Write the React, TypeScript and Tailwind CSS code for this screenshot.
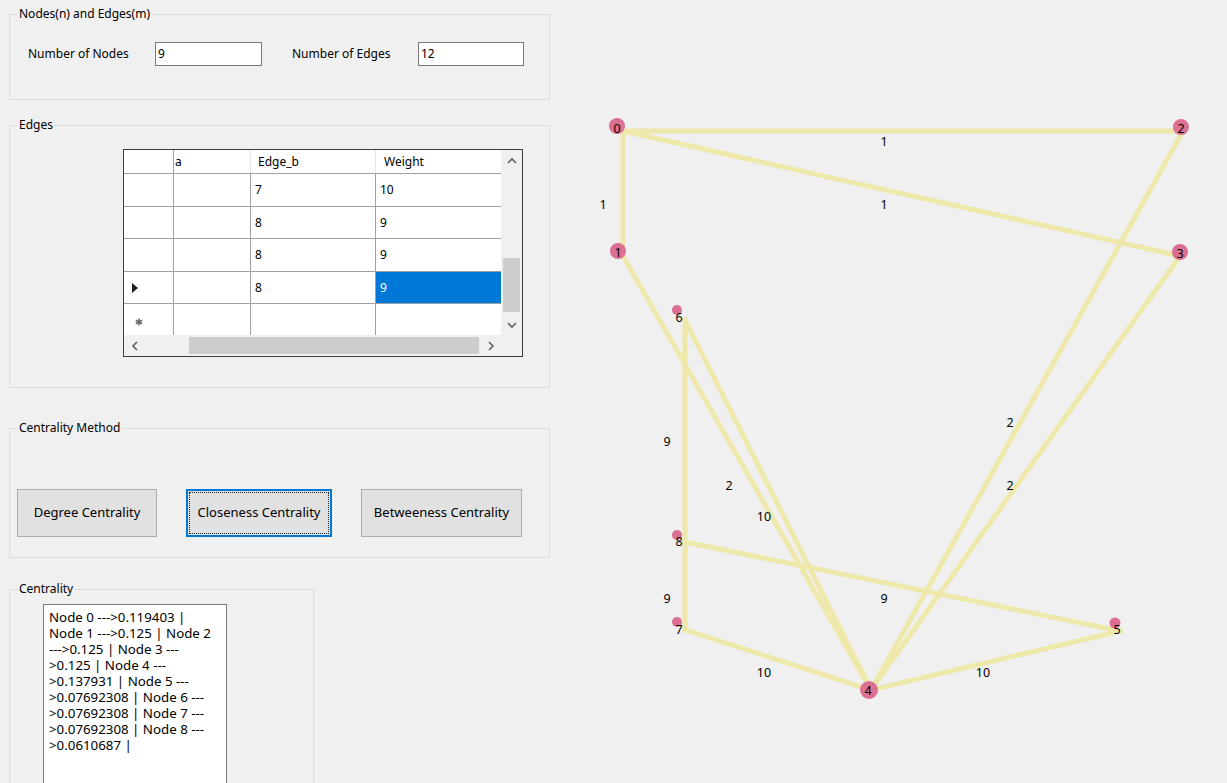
import React from "react";

const nodes = [
  { id: "0", cx: 617, cy: 126, r: 8, lx: 617, ly: 128 },
  { id: "1", cx: 618, cy: 251, r: 8, lx: 618, ly: 252 },
  { id: "2", cx: 1181, cy: 127, r: 8, lx: 1181, ly: 128 },
  { id: "3", cx: 1180, cy: 252, r: 8, lx: 1180, ly: 253 },
  { id: "4", cx: 869, cy: 690, r: 9, lx: 868, ly: 690 },
  { id: "5", cx: 1115, cy: 623, r: 5.5, lx: 1117, ly: 629 },
  { id: "6", cx: 677, cy: 310, r: 5, lx: 679, ly: 317 },
  { id: "7", cx: 677, cy: 622, r: 5, lx: 679, ly: 629 },
  { id: "8", cx: 677, cy: 535, r: 5, lx: 679, ly: 541 },
];

const anchor: Record<string, [number, number]> = {
  "0": [623, 131],
  "1": [623, 256],
  "2": [1183, 131],
  "3": [1180, 256],
  "4": [871, 690],
  "5": [1120, 631],
  "6": [685, 320],
  "7": [685, 630],
  "8": [685, 542],
};

const edges: { a: string; b: string; w: string; tx: number; ty: number }[] = [
  { a: "0", b: "2", w: "1", tx: 884, ty: 141 },
  { a: "0", b: "1", w: "1", tx: 603, ty: 204 },
  { a: "0", b: "3", w: "1", tx: 884, ty: 204 },
  { a: "1", b: "4", w: "2", tx: 729, ty: 485 },
  { a: "2", b: "4", w: "2", tx: 1010, ty: 422 },
  { a: "3", b: "4", w: "2", tx: 1010, ty: 485 },
  { a: "6", b: "8", w: "9", tx: 667, ty: 441 },
  { a: "6", b: "4", w: "10", tx: 764, ty: 516 },
  { a: "8", b: "7", w: "9", tx: 667, ty: 598 },
  { a: "8", b: "5", w: "9", tx: 884, ty: 598 },
  { a: "7", b: "4", w: "10", tx: 764, ty: 672 },
  { a: "5", b: "4", w: "10", tx: 983, ty: 672 },
];

const centralityLines = [
  "Node 0 --->0.119403 |",
  "Node 1 --->0.125 | Node 2",
  "--->0.125 | Node 3 ---",
  ">0.125 | Node 4 ---",
  ">0.137931 | Node 5 ---",
  ">0.07692308 | Node 6 ---",
  ">0.07692308 | Node 7 ---",
  ">0.07692308 | Node 8 ---",
  ">0.0610687 |",
];

const rows = [
  { b: "7", w: "10", h: "h-[33px]" },
  { b: "8", w: "9", h: "h-[32px]" },
  { b: "8", w: "9", h: "h-[33px]" },
  { b: "8", w: "9", h: "h-[32px]", current: true },
];

function Chevron({ dir }: { dir: "up" | "down" | "left" | "right" }) {
  const pts: Record<string, string> = {
    up: "1,6 5,2 9,6",
    down: "1,2 5,6 9,2",
    left: "6,1 2,5 6,9",
    right: "2,1 6,5 2,9",
  };
  const vertical = dir === "up" || dir === "down";
  return (
    <svg
      width={vertical ? 10 : 8}
      height={vertical ? 8 : 10}
      viewBox={vertical ? "0 0 10 8" : "0 0 8 10"}
    >
      <polyline points={pts[dir]} fill="none" stroke="#606060" strokeWidth="1.6" />
    </svg>
  );
}

function GroupBox({
  title,
  className,
  children,
}: {
  title: string;
  className: string;
  children?: React.ReactNode;
}) {
  return (
    <div className={`border border-[#dcdcdc] shrink-0 ${className}`}>
      <div className="-mt-[9px] ml-[7px] px-[2px] w-fit bg-[#f0f0f0] leading-[16px] text-[12px] text-black">
        {title}
      </div>
      {children}
    </div>
  );
}

export default function App() {
  return (
    <div className="w-[1227px] h-[783px] bg-[#f0f0f0] flex overflow-hidden font-['Noto_Sans',sans-serif] text-[12px] text-black">
      {/* Left column */}
      <div className="w-[560px] shrink-0 flex flex-col pl-[9px]">
        <GroupBox title="Nodes(n) and Edges(m)" className="mt-[14px] w-[541px] h-[86px]">
          <div className="flex items-center mt-[20px] pl-[18px]">
            <span className="w-[127px]">Number of Nodes</span>
            <div className="w-[107px] h-[24px] bg-white border border-[#7a7a7a] flex items-center pl-[2px]">9</div>
            <span className="w-[126px] ml-[30px]">Number of Edges</span>
            <div className="w-[106px] h-[24px] bg-white border border-[#7a7a7a] flex items-center pl-[2px]">12</div>
          </div>
        </GroupBox>

        <GroupBox title="Edges" className="mt-[25px] w-[541px] h-[263px]">
          <div className="mt-[16px] ml-[113px] w-[400px] h-[208px] border border-[#3c3c3c] bg-[#f0f0f0] flex">
            <div className="flex flex-col w-[377px]">
              {/* header */}
              <div className="flex h-[24px] bg-white border-b border-[#a0a0a0]">
                <div className="w-[50px] border-r border-[#a0a0a0]" />
                <div className="w-[77px] border-r border-[#e6e6e6] flex items-center overflow-hidden">
                  <span className="ml-[1px]">a</span>
                </div>
                <div className="w-[125px] border-r border-[#e6e6e6] flex items-center pl-[7px]">Edge_b</div>
                <div className="w-[125px] flex items-center pl-[8px]">Weight</div>
              </div>
              {rows.map((r, i) => (
                <div key={i} className={`flex ${r.h} bg-white border-b border-[#a0a0a0]`}>
                  <div className="w-[50px] border-r border-[#a0a0a0] flex items-center pl-[8px]">
                    {r.current && (
                      <svg width="6" height="10" viewBox="0 0 6 10">
                        <polygon points="0,0 6,5 0,10" fill="#1e1e1e" />
                      </svg>
                    )}
                  </div>
                  <div className="w-[77px] border-r border-[#a0a0a0]" />
                  <div className="w-[125px] border-r border-[#a0a0a0] flex items-center pl-[4px]">{r.b}</div>
                  <div
                    className={`w-[125px] flex items-center pl-[4px] ${
                      r.current ? "bg-[#0078d7] text-white" : ""
                    }`}
                  >
                    {r.w}
                  </div>
                </div>
              ))}
              {/* new row */}
              <div className="flex h-[31px] bg-white">
                <div className="w-[50px] border-r border-[#a0a0a0] flex items-center pl-[11px] pt-[4px]">
                  <svg width="8" height="8" viewBox="0 0 8 8">
                    <g stroke="#6a6a6a" strokeWidth="1.6">
                      <line x1="4" y1="0.5" x2="4" y2="7.5" />
                      <line x1="0.8" y1="2.2" x2="7.2" y2="5.8" />
                      <line x1="0.8" y1="5.8" x2="7.2" y2="2.2" />
                    </g>
                  </svg>
                </div>
                <div className="w-[77px] border-r border-[#a0a0a0]" />
                <div className="w-[125px] border-r border-[#a0a0a0]" />
                <div className="w-[125px]" />
              </div>
              {/* horizontal scrollbar */}
              <div className="flex h-[21px] bg-[#f0f0f0] items-center">
                <div className="w-[21px] flex items-center justify-center">
                  <Chevron dir="left" />
                </div>
                <div className="flex-1 h-full flex items-center">
                  <div className="ml-[44px] w-[290px] h-[17px] bg-[#cdcdcd]" />
                </div>
                <div className="w-[21px] flex items-center justify-center">
                  <Chevron dir="right" />
                </div>
              </div>
            </div>
            {/* vertical scrollbar */}
            <div className="w-[21px] flex flex-col">
              <div className="h-[185px] flex flex-col bg-[#f0f0f0]">
                <div className="h-[21px] flex items-center justify-center">
                  <Chevron dir="up" />
                </div>
                <div className="flex-1 flex flex-col items-center">
                  <div className="mt-[87px] w-[17px] h-[54px] bg-[#cdcdcd]" />
                </div>
                <div className="h-[21px] flex items-center justify-center">
                  <Chevron dir="down" />
                </div>
              </div>
              <div className="flex-1 bg-[#f0f0f0]" />
            </div>
          </div>
        </GroupBox>

        <GroupBox title="Centrality Method" className="mt-[40px] w-[541px] h-[130px]">
          <div className="flex mt-[53px] ml-[7px] gap-[29px] text-[13px]">
            <div className="w-[140px] h-[48px] bg-[#e1e1e1] border border-[#adadad] flex items-center justify-center">
              Degree Centrality
            </div>
            <div className="w-[146px] h-[48px] bg-[#e1e1e1] border-2 border-[#0078d7] p-[1px]">
              <div className="w-full h-full border border-dotted border-[#202020] flex items-center justify-center">
                Closeness Centrality
              </div>
            </div>
            <div className="w-[161px] h-[48px] bg-[#e1e1e1] border border-[#adadad] flex items-center justify-center">
              Betweeness Centrality
            </div>
          </div>
        </GroupBox>

        <GroupBox title="Centrality" className="mt-[31px] w-[305px] h-[220px]">
          <div className="mt-[7px] ml-[33px] w-[184px] h-[200px] bg-white border border-[#7a7a7a] pt-[4px] pl-[5px] text-[13.3px] leading-[16px]">
            {centralityLines.map((l, i) => (
              <div key={i} className="whitespace-pre">
                {l}
              </div>
            ))}
          </div>
        </GroupBox>
      </div>

      {/* Graph canvas */}
      <div className="flex-1 h-full">
        <svg width="667" height="783" viewBox="560 0 667 783" className="block">
          {edges.map((e, i) => {
            const [x1, y1] = anchor[e.a];
            const [x2, y2] = anchor[e.b];
            return (
              <line
                key={i}
                x1={x1}
                y1={y1}
                x2={x2}
                y2={y2}
                stroke="#eee8aa"
                strokeWidth="5"
                strokeLinecap="square"
              />
            );
          })}
          {nodes.map((n) => (
            <circle key={n.id} cx={n.cx} cy={n.cy} r={n.r} fill="#db7093" />
          ))}
          {nodes.map((n) => (
            <text
              key={"l" + n.id}
              x={n.lx}
              y={n.ly}
              textAnchor="middle"
              dominantBaseline="central"
              fontSize="12.5"
              fontFamily="Noto Sans, sans-serif"
              fill="#000"
            >
              {n.id}
            </text>
          ))}
          {edges.map((e, i) => (
            <text
              key={"w" + i}
              x={e.tx}
              y={e.ty}
              textAnchor="middle"
              dominantBaseline="central"
              fontSize="12.5"
              fontFamily="Noto Sans, sans-serif"
              fill="#000"
            >
              {e.w}
            </text>
          ))}
        </svg>
      </div>
    </div>
  );
}
